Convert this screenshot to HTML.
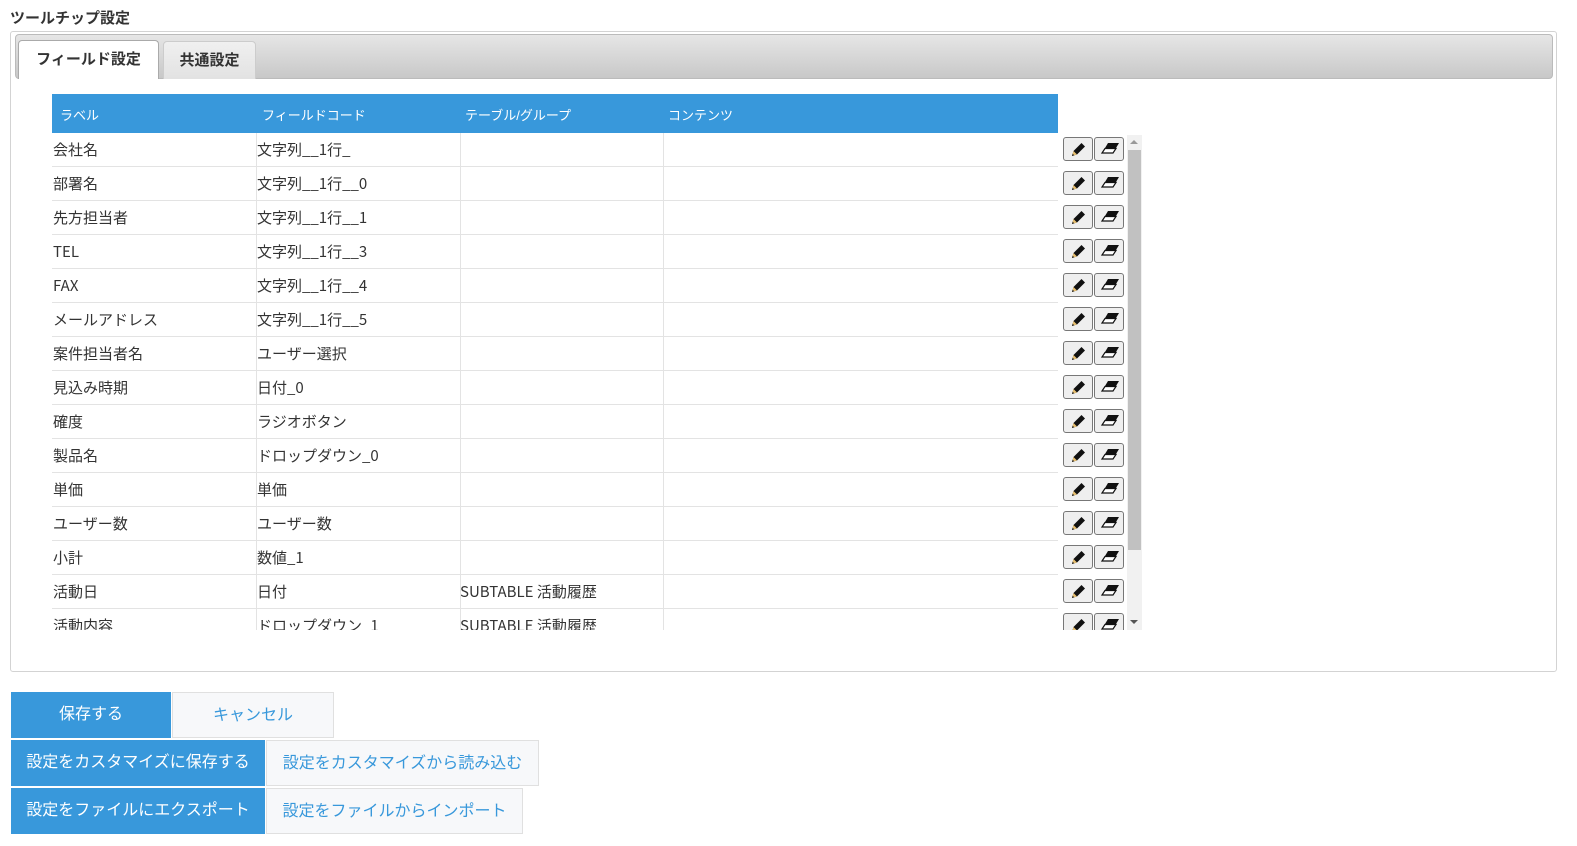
<!DOCTYPE html><html style="overflow:hidden"><head><meta charset="utf-8"><style>
html,body{overflow:hidden}
body{margin:0;background:#fff;font-family:"Liberation Sans","Noto Sans CJK JP",sans-serif;color:#333;width:1577px;height:846px;position:relative}
.abs{position:absolute}
h1{position:absolute;left:10px;top:7px;margin:0;font-size:15px;font-weight:bold;color:#333}
.panel{left:10px;top:31px;width:1545px;height:639px;border:1px solid #d3d3d3;border-radius:3px}
.tabbar{left:15px;top:34px;width:1538px;height:45px;background:linear-gradient(#e6e6e6,#c8c8c8);border:1px solid #bbb;border-radius:4px;box-sizing:border-box}
.tab{top:40px;height:39px;box-sizing:border-box;border:1px solid #ccc;border-bottom:none;border-radius:4px 4px 0 0;font-size:15px;font-weight:bold;text-align:center;line-height:38px;color:#333}
.hdr{left:52px;top:94px;width:1006px;height:39px;background:#3898db;color:#fff;font-size:13px}
.hdr span{position:absolute;top:11px}
.row{position:absolute;left:0;width:1006px;height:33px;border-bottom:1px solid #e3e3e3;font-size:15.5px}
.row span{position:absolute;top:6px;line-height:22px;white-space:nowrap;font-family:"Noto Sans CJK JP","Liberation Sans",sans-serif;font-size:15px}
.vl{position:absolute;top:133px;width:1px;height:497px;background:#e3e3e3}
.btn{position:absolute;width:28px;height:22px;border:1px solid #777;border-radius:3px;background:#efefef}
.b{position:absolute;box-sizing:border-box;font-size:16px;text-align:center;line-height:46px;height:46px}
.p{background:#3898db;color:#fff}
.s{background:#f7f8fa;color:#3898db;border:1px solid #e0e0e0}
</style></head><body>
<h1>ツールチップ設定</h1>
<div class="abs panel"></div>
<div class="abs tabbar"></div>
<div class="abs tab" style="left:18px;width:141px;background:#fff;border-color:#aaa">フィールド設定</div>
<div class="abs tab" style="left:163px;width:93px;background:linear-gradient(#f0f0f0,#e2e2e2);top:41px;height:38px">共通設定</div>
<div class="abs hdr"><span style="left:8px">ラベル</span><span style="left:210px">フィールドコード</span><span style="left:413px">テーブル/グループ</span><span style="left:616px">コンテンツ</span></div>
<div class="abs" style="left:52px;top:133px;width:1100px;height:497px;overflow:hidden">
<div id="rows"></div>
</div>
<div class="vl" style="left:256px"></div><div class="vl" style="left:460px"></div><div class="vl" style="left:663px"></div>
<div class="abs" style="left:1127px;top:135px;width:15px;height:495px;background:#f1f1f1"></div>
<div class="abs" style="left:1128px;top:150px;width:13px;height:400px;background:#c1c1c1"></div>
<div class="abs" style="left:1130px;top:140px;width:0;height:0;border:4px solid transparent;border-bottom:4px solid #999;border-top:none"></div>
<div class="abs" style="left:1130px;top:620px;width:0;height:0;border:4px solid transparent;border-top:4px solid #555;border-bottom:none"></div>
<div class="b p" style="left:11px;top:692px;width:160px">保存する</div>
<div class="b s" style="left:172px;top:692px;width:162px">キャンセル</div>
<div class="b p" style="left:11px;top:740px;width:254px">設定をカスタマイズに保存する</div>
<div class="b s" style="left:266px;top:740px;width:273px">設定をカスタマイズから読み込む</div>
<div class="b p" style="left:11px;top:788px;width:254px">設定をファイルにエクスポート</div>
<div class="b s" style="left:266px;top:788px;width:257px">設定をファイルからインポート</div>
<script>
var d=[["会社名","文字列__1行_",""],["部署名","文字列__1行__0",""],["先方担当者","文字列__1行__1",""],["TEL","文字列__1行__3",""],["FAX","文字列__1行__4",""],["メールアドレス","文字列__1行__5",""],["案件担当者名","ユーザー選択",""],["見込み時期","日付_0",""],["確度","ラジオボタン",""],["製品名","ドロップダウン_0",""],["単価","単価",""],["ユーザー数","ユーザー数",""],["小計","数値_1",""],["活動日","日付","SUBTABLE 活動履歴"],["活動内容","ドロップダウン_1","SUBTABLE 活動履歴"]];
var pen='<svg width="28" height="22" viewBox="0 0 28 22"><path d="M8 18l1.5-5 8-8 3.5 3.5-8 8z" fill="#111"/><path d="M8 18l1.5-5 3.5 3.5z" fill="#e8c070"/><path d="M8 18l0.7-2.2 1.5 1.5z" fill="#111"/></svg>';
var er='<svg width="28" height="22" viewBox="0 0 28 22"><path d="M13 5h11l-6 10h-11z" fill="#111"/><path d="M10 10.5h11l-3 4.5h-11z" fill="#fff" stroke="#111" stroke-width="1.2"/></svg>';
var h='';d.forEach(function(r,i){var t=i*34;h+='<div class="row" style="top:'+t+'px"><span style="left:1px">'+r[0]+'</span><span style="left:205px">'+r[1]+'</span><span style="left:408px">'+r[2]+'</span></div><div class="btn" style="left:1011px;top:'+(t+4)+'px">'+pen+'</div><div class="btn" style="left:1042px;top:'+(t+4)+'px">'+er+'</div>';});
document.getElementById('rows').innerHTML=h;
</script>
</body></html>
